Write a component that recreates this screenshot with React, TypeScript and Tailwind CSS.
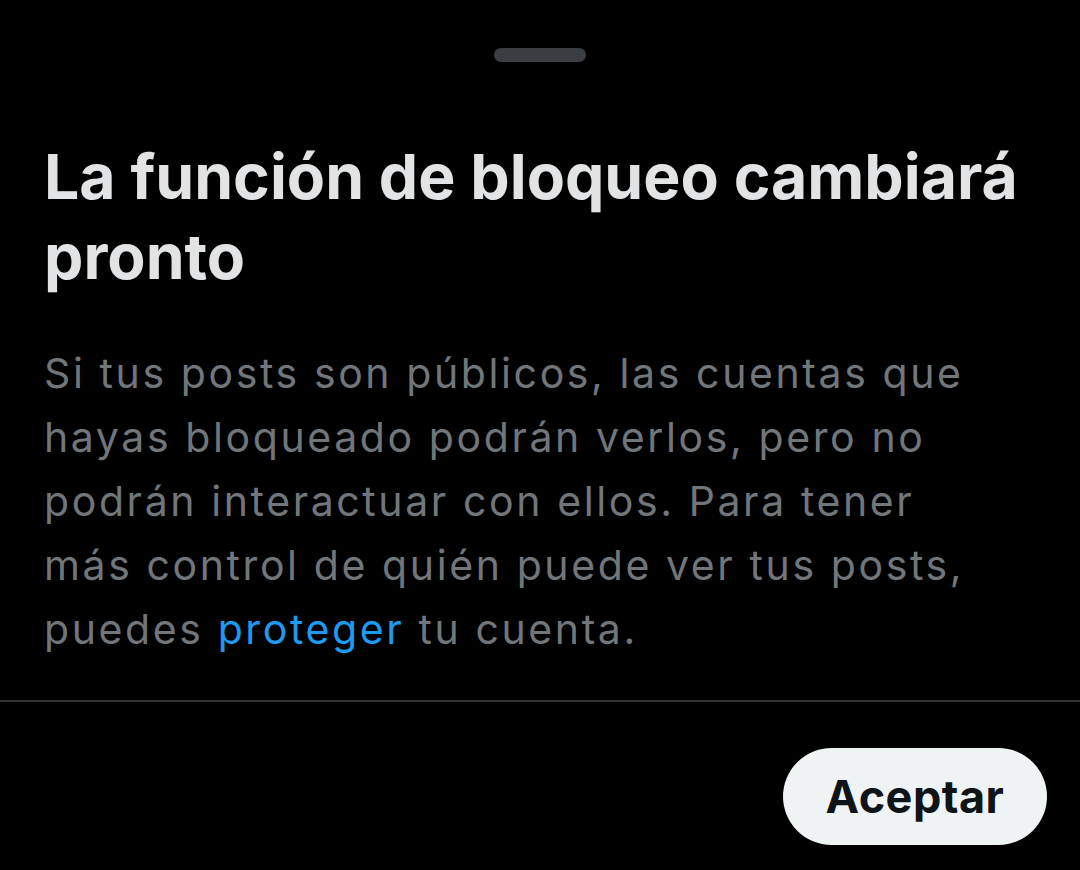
import React from 'react';

const font = { fontFamily: 'Inter, "Noto Sans", sans-serif' };

export default function App() {
  return (
    <div className="min-h-[870px] w-full bg-black flex flex-col" style={font}>
      {/* drag handle */}
      <div className="flex justify-center pt-[48px]">
        <div className="h-[14px] w-[92px] rounded-full bg-[#3a3d41]" />
      </div>

      <div className="px-[44px] pt-[74px]">
        <h1 className="text-[62.5px] leading-[80px] font-bold text-[#e1e3e4]">
          La función de bloqueo cambiará pronto
        </h1>
        <p className="mt-[45px] max-w-[950px] text-[41px] leading-[64px] tracking-[2.6px] text-[#71767b]">
          Si tus posts son públicos, las cuentas que hayas bloqueado podrán verlos, pero no podrán
          interactuar con ellos. Para tener más control de quién puede ver tus posts, puedes{' '}
          <span className="text-[#1d9bf0]">proteger</span> tu cuenta.
        </p>
      </div>

      <div className="mt-[39px] h-[2px] w-full bg-[#2f3336]" />

      <div className="flex justify-end px-[33px] pt-[46px]">
        <button className="h-[97px] w-[264px] rounded-full bg-[#eff3f4] text-[45px] tracking-[0.5px] font-bold text-[#0f1419]">
          Aceptar
        </button>
      </div>
    </div>
  );
}
